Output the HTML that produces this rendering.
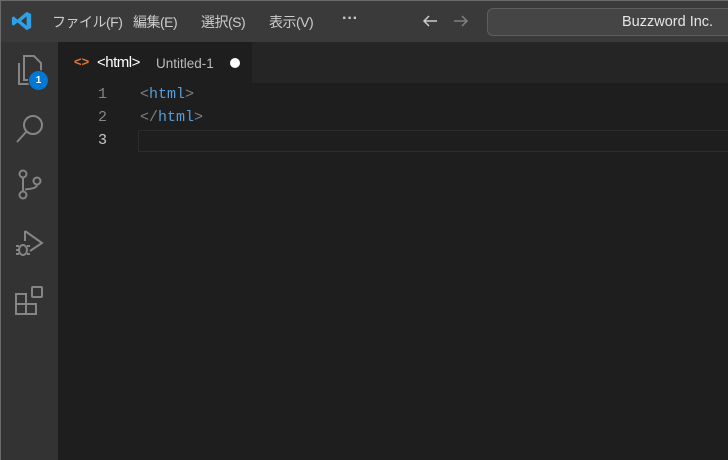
<!DOCTYPE html>
<html><head><meta charset="utf-8"><style>
*{margin:0;padding:0;box-sizing:border-box}
body{width:728px;height:460px;overflow:hidden;background:#1e1e1e;font-family:"Liberation Sans","Noto Sans CJK JP",sans-serif;position:relative}
.title{position:absolute;left:0;top:0;width:728px;height:42px;background:#3a3a3a;border-top:1px solid #6a6a6a;border-left:1px solid #6a6a6a}
.menu{position:absolute;top:11px;font-size:14px;color:#cccccc;letter-spacing:-0.5px}
.search{position:absolute;left:486px;top:7px;width:250px;height:28px;background:#454545;border:1px solid #5e5e5e;border-radius:6px;color:#e6e6e6;font-size:14.5px;padding:5px 0 0 134px}
.act{position:absolute;left:0;top:42px;width:58px;height:418px;background:#333333;border-left:1px solid #6a6a6a}
.tabs{position:absolute;left:58px;top:42px;width:670px;height:41px;background:#252526}
.tab{position:absolute;left:0;top:0;width:194px;height:41px;background:#1e1e1e}
.code{position:absolute;font-family:"Liberation Mono",monospace;font-size:15px}
.ln{color:#858585;left:98px}
</style></head><body>
<div class="title">
<svg style="position:absolute;left:10px;top:9px" width="22" height="22" viewBox="0 0 24 24"><path d="M17 2 L22 4.5 V19.5 L17 22 L7 13.5 L3 17 L1 16 V8 L3 7 L7 10.5 Z M17 7 L11 12 L17 17 Z" fill="#2f9fe6"/></svg>
<span class="menu" style="left:51px">ファイル(F)</span>
<span class="menu" style="left:132px">編集(E)</span>
<span class="menu" style="left:200px">選択(S)</span>
<span class="menu" style="left:268px">表示(V)</span>
<span style="position:absolute;left:341px;top:9px;font-size:16px;color:#cccccc;font-weight:bold">···</span>
<svg style="position:absolute;left:420px;top:12px" width="18" height="16" viewBox="0 0 18 16"><path d="M16 8H3M8 3L3 8l5 5" stroke="#cccccc" stroke-width="1.5" fill="none"/></svg>
<svg style="position:absolute;left:451px;top:12px" width="18" height="16" viewBox="0 0 18 16"><path d="M2 8h13M10 3l5 5-5 5" stroke="#808080" stroke-width="1.5" fill="none"/></svg>
<div class="search">Buzzword Inc.</div>
</div>
<div class="act">
<svg style="position:absolute;left:13px;top:11px" width="32" height="34" viewBox="0 0 32 34" fill="none" stroke="#858585" stroke-width="2"><path d="M10 3h10l7 7v17H10z M5 10v21h15"/></svg>
<div style="position:absolute;left:28px;top:29px;width:19px;height:19px;border-radius:50%;background:#0078d4;color:#fff;font-size:10px;font-weight:bold;text-align:center;line-height:19px;box-shadow:0 0 0 1px #333">1</div>
<svg style="position:absolute;left:13px;top:70px" width="32" height="34" viewBox="0 0 32 34" fill="none" stroke="#858585" stroke-width="2"><circle cx="19" cy="13" r="9"/><path d="M12.5 19.5L3 30"/></svg>
<svg style="position:absolute;left:14px;top:126px" width="30" height="34" viewBox="0 0 30 34" fill="none" stroke="#858585" stroke-width="2"><circle cx="8" cy="6" r="3.5"/><circle cx="8" cy="27" r="3.5"/><circle cx="22" cy="13" r="3.5"/><path d="M8 9.5v14M22 16.5c0 3-3 4-12 5"/></svg>
<svg style="position:absolute;left:12px;top:184px" width="34" height="34" viewBox="0 0 34 34" fill="none" stroke="#858585" stroke-width="2"><path d="M12 5l17 12-12 8"/><path d="M12 5v10"/><ellipse cx="10" cy="24" rx="4" ry="5"/><path d="M3 20h3M3 24h3M3 28h3M14 20h3M14 28h3"/></svg>
<svg style="position:absolute;left:13px;top:242px" width="32" height="34" viewBox="0 0 32 34" fill="none" stroke="#858585" stroke-width="2"><rect x="2" y="10" width="10" height="10"/><rect x="2" y="20" width="10" height="10"/><rect x="12" y="20" width="10" height="10"/><rect x="18" y="3" width="10" height="10" rx="1"/></svg>
</div>
<div class="tabs"><div class="tab">
<span style="position:absolute;left:16px;top:12px;color:#e37933;font-size:13px;font-weight:bold">&lt;&gt;</span>
<span style="position:absolute;left:39px;top:12px;color:#fff;font-size:15px;letter-spacing:-0.5px">&lt;html&gt;</span>
<span style="position:absolute;left:98px;top:14px;color:#bbbbbb;font-size:13.5px">Untitled-1</span>
<div style="position:absolute;left:172px;top:16px;width:10px;height:10px;border-radius:50%;background:#fff"></div>
</div></div>
<div style="position:absolute;left:138px;top:130px;width:590px;height:22px;border:1px solid #2c2c2c;border-right:none"></div>
<div class="code ln" style="top:86px">1</div>
<div class="code ln" style="top:109px">2</div>
<div class="code" style="top:132px;left:98px;color:#c6c6c6">3</div>
<div class="code" style="left:140px;top:86px;color:#808080">&lt;<span style="color:#569cd6">html</span>&gt;</div>
<div class="code" style="left:140px;top:109px;color:#808080">&lt;/<span style="color:#569cd6">html</span>&gt;</div>
</body></html>
